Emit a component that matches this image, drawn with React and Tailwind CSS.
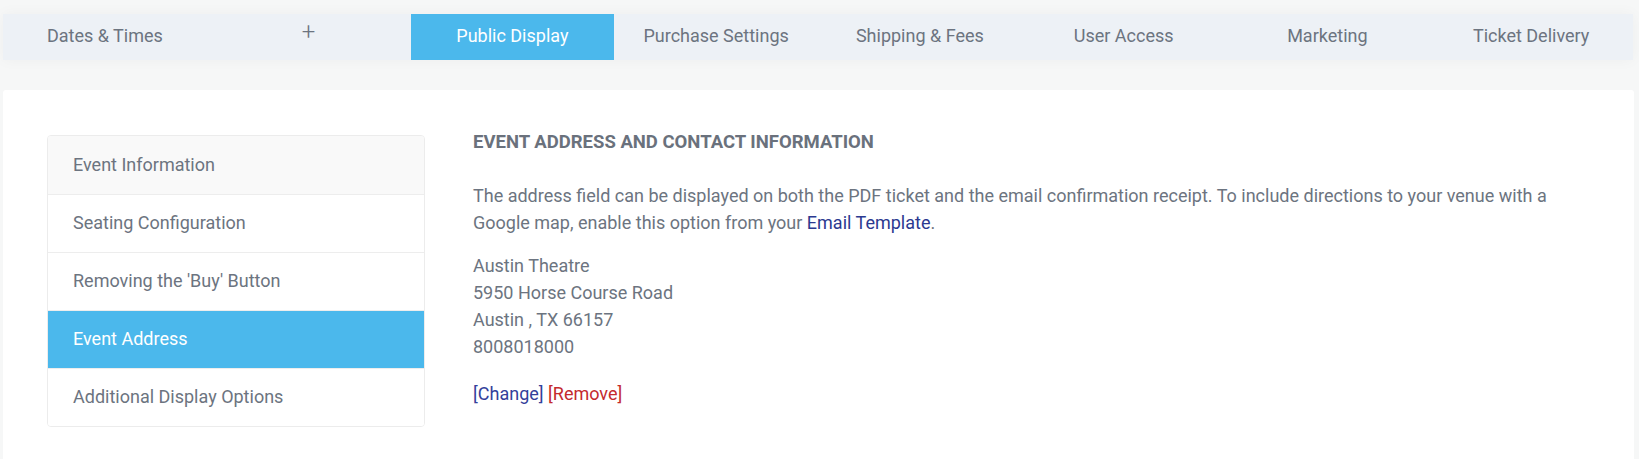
import React from 'react';

// ── Top tab strip ──

const tabs = [
  { label: 'Dates & Times' },
  { label: '+', plus: true },
  { label: 'Public Display', active: true },
  { label: 'Purchase Settings' },
  { label: 'Shipping & Fees' },
  { label: 'User Access' },
  { label: 'Marketing' },
  { label: 'Ticket Delivery' },
];

const sideItems = [
  { label: 'Event Information', shaded: true },
  { label: 'Seating Configuration' },
  { label: "Removing the 'Buy' Button" },
  { label: 'Event Address', active: true },
  { label: 'Additional Display Options' },
];

const TabStrip = () => (
  <div className="grid grid-cols-8 h-[46px] mr-[3px] bg-[#edf1f6] shadow-[0_0_14px_rgba(0,0,0,0.04)]">
    {tabs.map((tab) => (
      <div
        key={tab.label}
        className={`flex items-center justify-center pb-[3px] text-[18px] ${
          tab.active ? 'bg-[#4bb8ec] text-white' : 'text-[#6c7480]'
        }`}
      >
        {tab.plus ? (
          <span className="text-[24px] font-light leading-none -mt-[8px] text-[#6c7480]">+</span>
        ) : (
          tab.label
        )}
      </div>
    ))}
  </div>
);

// ── Sidebar list ──

const SideList = () => (
  <ul className="w-[378px] shrink-0 mt-[5px] self-start rounded border border-[#ececec] overflow-hidden">
    {sideItems.map((item, i) => (
      <li
        key={item.label}
        className={`h-[58px] flex items-center pl-[25px] pb-[2px] text-[18px] ${
          i > 0 ? 'border-t border-[#ededed]' : ''
        } ${
          item.active
            ? 'bg-[#4bb8ec] text-white border-[#4bb8ec]'
            : item.shaded
            ? 'bg-[#f9f9f9] text-[#6c7480]'
            : 'bg-white text-[#6c7480]'
        }`}
      >
        {item.label}
      </li>
    ))}
  </ul>
);

// ── Address panel ──

const AddressPanel = () => (
  <div className="ml-[48px] text-[18px] text-[#6c7480]">
    <h2 className="text-[18.5px] leading-[24px] font-bold text-[#6a717c] uppercase">
      Event Address and Contact Information
    </h2>
    <p className="mt-[28px] leading-[27px] w-[1100px]">
      The address field can be displayed on both the PDF ticket and the email confirmation receipt. To include
      directions to your venue with a Google map, enable this option from your{' '}
      <a className="text-[#2b3990]">Email Template</a>.
    </p>
    <div className="mt-[16px] leading-[27px]">
      <div>Austin Theatre</div>
      <div>5950 Horse Course Road</div>
      <div>Austin , TX 66157</div>
      <div>8008018000</div>
    </div>
    <div className="mt-[20px] leading-[27px]">
      <a className="text-[#33409a]">[Change]</a> <a className="text-[#c42a2e]">[Remove]</a>
    </div>
  </div>
);

export default function App() {
  return (
    <div className="w-[1639px] h-[459px] overflow-hidden bg-[#f6f7f7] px-[3px] pt-[14px] font-['Roboto',sans-serif]">
      <TabStrip />
      <div className="mt-[30px] h-[400px] mr-[2px] bg-white rounded-t-[3px] flex pl-[44px] pt-[40px]">
        <SideList />
        <AddressPanel />
      </div>
    </div>
  );
}
